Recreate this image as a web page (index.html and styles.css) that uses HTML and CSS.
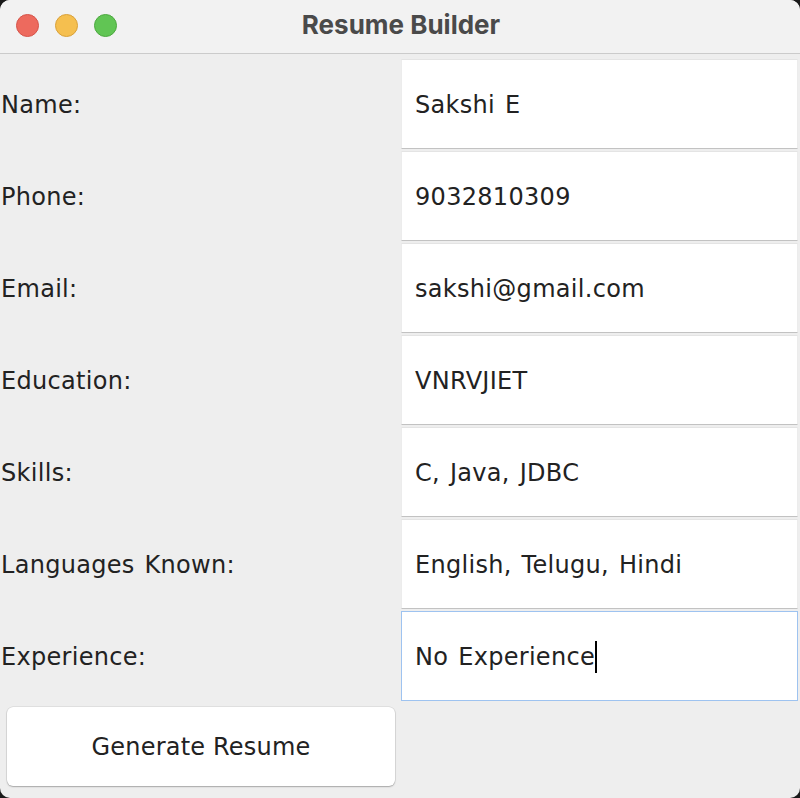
FILE: index.html
```html
<!DOCTYPE html>
<html>
<head>
<meta charset="utf-8">
<title>Resume Builder</title>
<link rel="stylesheet" href="styles.css">
</head>
<body>
<div class="window">
  <div class="titlebar">
    <div class="lights">
      <span class="light red"></span>
      <span class="light yellow"></span>
      <span class="light green"></span>
    </div>
    <div class="title">Resume Builder</div>
  </div>
  <div class="form">
    <div class="label">Name:</div>
    <div class="field">Sakshi E</div>
    <div class="label">Phone:</div>
    <div class="field">9032810309</div>
    <div class="label">Email:</div>
    <div class="field">sakshi@gmail.com</div>
    <div class="label">Education:</div>
    <div class="field">VNRVJIET</div>
    <div class="label">Skills:</div>
    <div class="field">C, Java, JDBC</div>
    <div class="label">Languages Known:</div>
    <div class="field">English, Telugu, Hindi</div>
    <div class="label">Experience:</div>
    <div class="field focused"><span>No Experience</span><span class="caret"></span></div>
    <div class="btn-cell"><button class="btn">Generate Resume</button></div>
    <div></div>
  </div>
</div>
</body>
</html>
```

FILE: styles.css
```css
html, body {
  margin: 0;
  padding: 0;
  background: #1a1a1a;
  width: 800px;
  height: 798px;
  overflow: hidden;
}
.window {
  width: 800px;
  height: 798px;
  background: #eeeeee;
  border-radius: 10px;
  overflow: hidden;
  font-family: "DejaVu Sans", sans-serif;
  color: #222222;
}
.titlebar {
  height: 53px;
  background: #f2f2f2;
  border-bottom: 1px solid #cbcbcb;
  display: flex;
  align-items: center;
  justify-content: center;
  position: relative;
}
.lights {
  position: absolute;
  left: 16px;
  top: 14px;
  display: flex;
  gap: 16px;
}
.light {
  width: 23px;
  height: 23px;
  border-radius: 50%;
  box-sizing: border-box;
}
.red { background: #ed6a5e; border: 1px solid #d6544a; }
.yellow { background: #f5bf4f; border: 1px solid #d9a13a; }
.green { background: #61c554; border: 1px solid #4ca83f; }
.title {
  font-family: "Inter", "Liberation Sans", sans-serif;
  font-weight: 700;
  font-size: 26px;
  color: #4a4a4a;
  margin-top: -4px;
  margin-left: 2px;
}
.form {
  display: grid;
  grid-template-columns: 401px 397px;
  grid-auto-rows: 90px;
  row-gap: 2px;
  padding-top: 5px;
}
.label {
  display: flex;
  align-items: center;
  font-size: 24px;
  letter-spacing: 0.3px;
  word-spacing: 2px;
  padding-left: 1px;
  padding-top: 2px;
}
.field {
  background: #ffffff;
  border-top: 1px solid #e4e4e4;
  border-left: 1px solid #ececec;
  border-right: 1px solid #ececec;
  border-bottom: 1px solid #c2c2c2;
  display: flex;
  align-items: center;
  padding-left: 13px;
  padding-top: 2px;
  font-size: 24px;
  letter-spacing: 0.3px;
  word-spacing: 2px;
}
.field.focused {
  border: 1px solid #9ec3f0;
}
.caret {
  display: inline-block;
  width: 2px;
  height: 32px;
  background: #000;
}
.btn-cell {
  padding: 4px 6px 7px 7px;
  display: flex;
}
.btn {
  flex: 1;
  background: #ffffff;
  border: none;
  border-radius: 6px;
  box-shadow: 0 0 0 0.5px rgba(0,0,0,0.12), 0 1px 1.5px rgba(0,0,0,0.25);
  font-family: "DejaVu Sans", sans-serif;
  font-size: 24px;
  letter-spacing: 0.2px;
  color: #222222;
  padding: 0;
}
```
